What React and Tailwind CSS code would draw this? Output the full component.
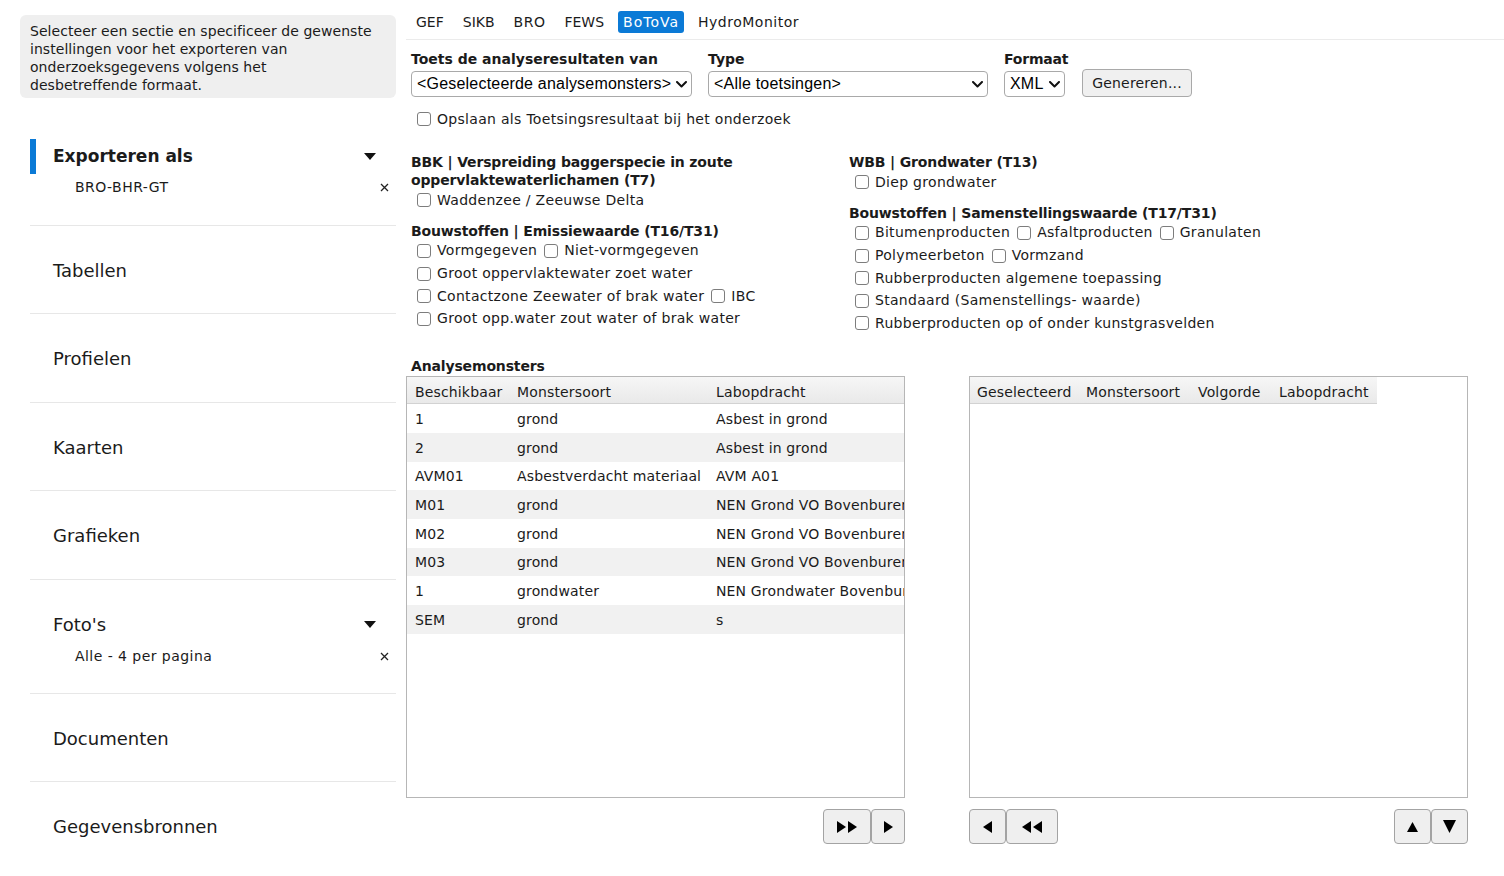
import React from "react";

const Check = () => (
  <span className="inline-block w-[14px] h-[14px] border border-[#7d7d7d] rounded-[3px] bg-white shrink-0" />
);

function CbRow({ items }) {
  return (
    <div className="flex items-center h-[22.6px] whitespace-nowrap tracking-[0.3px]">
      {items.map((t, i) => (
        <span key={i} className={"flex items-center gap-[6px] " + (i === 0 ? "ml-[6px]" : "ml-[7px]")}>
          <Check />
          <span>{t}</span>
        </span>
      ))}
    </div>
  );
}

function Group({ title, rows, className = "" }) {
  return (
    <div className={className}>
      <div className="font-bold leading-[18px] tracking-[-0.15px]">{title}</div>
      {rows.map((r, i) => (
        <CbRow key={i} items={r} />
      ))}
    </div>
  );
}

const Tri = () => (
  <svg width="12" height="7" viewBox="0 0 12 7" className="mr-[20px]">
    <path d="M0 0 L12 0 L6 7 Z" fill="#111" />
  </svg>
);

const X = () => (
  <svg width="9" height="9" viewBox="0 0 9 9" className="mr-[7px]">
    <path d="M1 1 L8 8 M8 1 L1 8" stroke="#222" strokeWidth="1.3" />
  </svg>
);

function SideItem({ title, active, sub, arrow, subTop }) {
  return (
    <div className={"pt-[27px] border-b border-[#e7e7e7] " + (sub ? (subTop ? "pb-[27px]" : "pb-[25px]") : "pb-[25.4px]")}>
      <div
        className={
          "flex items-center justify-between h-[35px] border-l-[6px] pl-[17px] " +
          (active ? "border-[#0b7ad6]" : "border-transparent")
        }
      >
        <span className={active ? "text-[17px] font-bold" : "text-[18px]"}>{title}</span>
        {arrow && <Tri />}
      </div>
      {sub && (
        <div
          className={
            "flex items-center justify-between h-[22px] pl-[45px] text-[14px] " + (subTop ? "mt-[2px]" : "mt-[4px]")
          }
        >
          <span className="tracking-[0.45px]">{sub}</span>
          <X />
        </div>
      )}
    </div>
  );
}

const Chevron = () => (
  <svg width="11" height="7" viewBox="0 0 11 7" className="shrink-0">
    <path d="M1 1 L5.5 5.5 L10 1" stroke="#111" strokeWidth="2" fill="none" strokeLinecap="round" strokeLinejoin="round" />
  </svg>
);

function Select({ value, className }) {
  return (
    <div
      className={
        "flex items-center justify-between h-[26px] border border-[#a9a9a9] rounded-[4px] bg-white pl-[5px] pr-[4px] font-['Liberation_Sans',sans-serif] text-[16px] tracking-[0.2px] text-black whitespace-nowrap overflow-hidden " +
        className
      }
    >
      <span>{value}</span>
      <Chevron />
    </div>
  );
}

const TriR = () => (
  <svg width="9" height="12" viewBox="0 0 9 12"><path d="M0 0 L9 6 L0 12 Z" fill="#000" /></svg>
);
const TriL = () => (
  <svg width="9" height="12" viewBox="0 0 9 12"><path d="M9 0 L0 6 L9 12 Z" fill="#000" /></svg>
);

function Btn({ children, className }) {
  return (
    <div
      className={
        "flex items-center justify-center gap-[2px] h-[35px] bg-[#efefef] border border-[#a3a3a3] rounded-[4px] " + className
      }
    >
      {children}
    </div>
  );
}

const rows = [
  ["1", "grond", "Asbest in grond"],
  ["2", "grond", "Asbest in grond"],
  ["AVM01", "Asbestverdacht materiaal", "AVM A01"],
  ["M01", "grond", "NEN Grond VO Bovenburen"],
  ["M02", "grond", "NEN Grond VO Bovenburen"],
  ["M03", "grond", "NEN Grond VO Bovenburen"],
  ["1", "grondwater", "NEN Grondwater Bovenburen"],
  ["SEM", "grond", "s"],
];

const tabs = [
  { t: "GEF", c: "px-[5px]" },
  { t: "SIKB", c: "px-[5px]" },
  { t: "BRO", c: "px-[5px] tracking-[0.5px]" },
  { t: "FEWS", c: "px-[5px]" },
  { t: "BoToVa", c: "px-[5px] tracking-[1px] bg-[#0b7ad6] text-white" },
  { t: "HydroMonitor", c: "px-[5px] tracking-[0.5px]" },
];

export default function App() {
  return (
    <div className="w-[1504px] h-[876px] overflow-hidden bg-white text-[#1b1b1b] font-['DejaVu_Sans',sans-serif] text-[14px] flex">
      {/* Sidebar */}
      <div className="w-[376px] ml-[20px] shrink-0 pt-[15px]">
        <div className="bg-[#efefef] rounded-[6px] px-[10px] pt-[7px] leading-[18px] h-[83px] whitespace-nowrap tracking-[0.05px]">
          Selecteer een sectie en specificeer de gewenste
          <br />
          instellingen voor het exporteren van
          <br />
          onderzoeksgegevens volgens het
          <br />
          desbetreffende formaat.
        </div>
        <div className="ml-[10px] mt-[14px]">
          <SideItem title="Exporteren als" active sub="BRO-BHR-GT" arrow subTop />
          <SideItem title="Tabellen" />
          <SideItem title="Profielen" />
          <SideItem title="Kaarten" />
          <SideItem title="Grafieken" />
          <SideItem title="Foto's" sub="Alle - 4 per pagina" arrow />
          <SideItem title="Documenten" />
          <div className="pt-[27px]">
            <div className="flex items-center h-[35px] border-l-[6px] border-transparent pl-[17px] text-[18px]">Gegevensbronnen</div>
          </div>
        </div>
      </div>

      {/* Main */}
      <div className="ml-[10px] flex-1 flex flex-col">
        <div className="flex items-center pt-[11px] pb-[6px] pl-[5px] border-b border-[#ebebeb] gap-[9px]">
          {tabs.map((x) => (
            <span key={x.t} className={"h-[22px] flex items-center rounded-[3px] " + x.c}>
              {x.t}
            </span>
          ))}
        </div>

        <div className="pl-[5px] mt-[10px]">
          <div className="flex items-end">
            <div className="w-[281px]">
              <div className="font-bold leading-[18px] mb-[3px] whitespace-nowrap">Toets de analyseresultaten van</div>
              <Select value="<Geselecteerde analysemonsters>" className="w-[281px]" />
            </div>
            <div className="ml-[16px] w-[280px]">
              <div className="font-bold leading-[18px] mb-[3px]">Type</div>
              <Select value="<Alle toetsingen>" className="w-[280px]" />
            </div>
            <div className="ml-[16px] w-[61px]">
              <div className="font-bold leading-[18px] mb-[3px] whitespace-nowrap tracking-[-0.2px]">Formaat</div>
              <Select value="XML" className="w-[61px]" />
            </div>
            <div className="ml-[17px] h-[28px] w-[110px] flex items-center justify-center bg-[#f0f0f0] border border-[#a9a9a9] rounded-[4px] tracking-[0.2px]">
              Genereren...
            </div>
          </div>

          <div className="mt-[11px]">
            <CbRow items={["Opslaan als Toetsingsresultaat bij het onderzoek"]} />
          </div>

          <div className="flex mt-[22.5px]">
            <div className="w-[438px]">
              <div className="font-bold leading-[18px] tracking-[-0.15px]">
                BBK | Verspreiding baggerspecie in zoute
                <br />
                oppervlaktewaterlichamen (T7)
              </div>
              <CbRow items={["Waddenzee / Zeeuwse Delta"]} />
              <Group
                className="mt-[10px]"
                title="Bouwstoffen | Emissiewaarde (T16/T31)"
                rows={[
                  ["Vormgegeven", "Niet-vormgegeven"],
                  ["Groot oppervlaktewater zoet water"],
                  ["Contactzone Zeewater of brak water", "IBC"],
                  ["Groot opp.water zout water of brak water"],
                ]}
              />
            </div>
            <div>
              <Group title="WBB | Grondwater (T13)" rows={[["Diep grondwater"]]} />
              <Group
                className="mt-[10px]"
                title="Bouwstoffen | Samenstellingswaarde (T17/T31)"
                rows={[
                  ["Bitumenproducten", "Asfaltproducten", "Granulaten"],
                  ["Polymeerbeton", "Vormzand"],
                  ["Rubberproducten algemene toepassing"],
                  ["Standaard (Samenstellings- waarde)"],
                  ["Rubberproducten op of onder kunstgrasvelden"],
                ]}
              />
            </div>
          </div>

          <div className="font-bold leading-[18px] mt-[22px] tracking-[-0.15px]">Analysemonsters</div>
        </div>

        <div className="flex mt-[1.5px] gap-[64px] tracking-[0.15px]">
          <div className="w-[499px]">
            <div className="h-[422px] border border-[#b6b6b6] overflow-hidden">
              <div className="flex h-[27px] pt-[4px] items-center bg-gradient-to-b from-[#f6f6f6] to-[#e9e9e9] border-b border-[#d2d2d2] whitespace-nowrap">
                <span className="w-[102px] pl-[8px] shrink-0">Beschikbaar</span>
                <span className="w-[199px] pl-[8px] shrink-0">Monstersoort</span>
                <span className="pl-[8px] shrink-0">Labopdracht</span>
              </div>
              {rows.map((r, i) => (
                <div
                  key={i}
                  className={
                    "flex h-[28.7px] pt-[2px] items-center whitespace-nowrap " + (i % 2 === 1 ? "bg-[#f1f1f1]" : "bg-white")
                  }
                >
                  <span className="w-[102px] pl-[8px] shrink-0">{r[0]}</span>
                  <span className="w-[199px] pl-[8px] shrink-0">{r[1]}</span>
                  <span className="pl-[8px] shrink-0">{r[2]}</span>
                </div>
              ))}
            </div>
            <div className="flex justify-end mt-[11px]">
              <Btn className="w-[48px]">
                <TriR />
                <TriR />
              </Btn>
              <Btn className="w-[34px]">
                <TriR />
              </Btn>
            </div>
          </div>

          <div className="w-[499px]">
            <div className="h-[422px] border border-[#b6b6b6] overflow-hidden">
              <div className="flex h-[27px] pt-[4px] w-[407px] items-center bg-gradient-to-b from-[#f6f6f6] to-[#e9e9e9] border-b border-[#d2d2d2] whitespace-nowrap">
                <span className="w-[109px] pl-[7px] shrink-0">Geselecteerd</span>
                <span className="w-[112px] pl-[7px] shrink-0">Monstersoort</span>
                <span className="w-[81px] pl-[7px] shrink-0">Volgorde</span>
                <span className="w-[105px] pl-[7px] shrink-0">Labopdracht</span>
              </div>
            </div>
            <div className="flex justify-between mt-[11px]">
              <div className="flex">
                <Btn className="w-[37px]">
                  <TriL />
                </Btn>
                <Btn className="w-[52px]">
                  <TriL />
                  <TriL />
                </Btn>
              </div>
              <div className="flex">
                <Btn className="w-[37px]">
                  <svg width="11" height="10" viewBox="0 0 11 10"><path d="M5.5 0 L11 10 L0 10 Z" fill="#000" /></svg>
                </Btn>
                <Btn className="w-[37px]">
                  <svg width="13" height="13" viewBox="0 0 13 13"><path d="M0 0 L13 0 L6.5 13 Z" fill="#000" /></svg>
                </Btn>
              </div>
            </div>
          </div>
        </div>
      </div>
    </div>
  );
}
